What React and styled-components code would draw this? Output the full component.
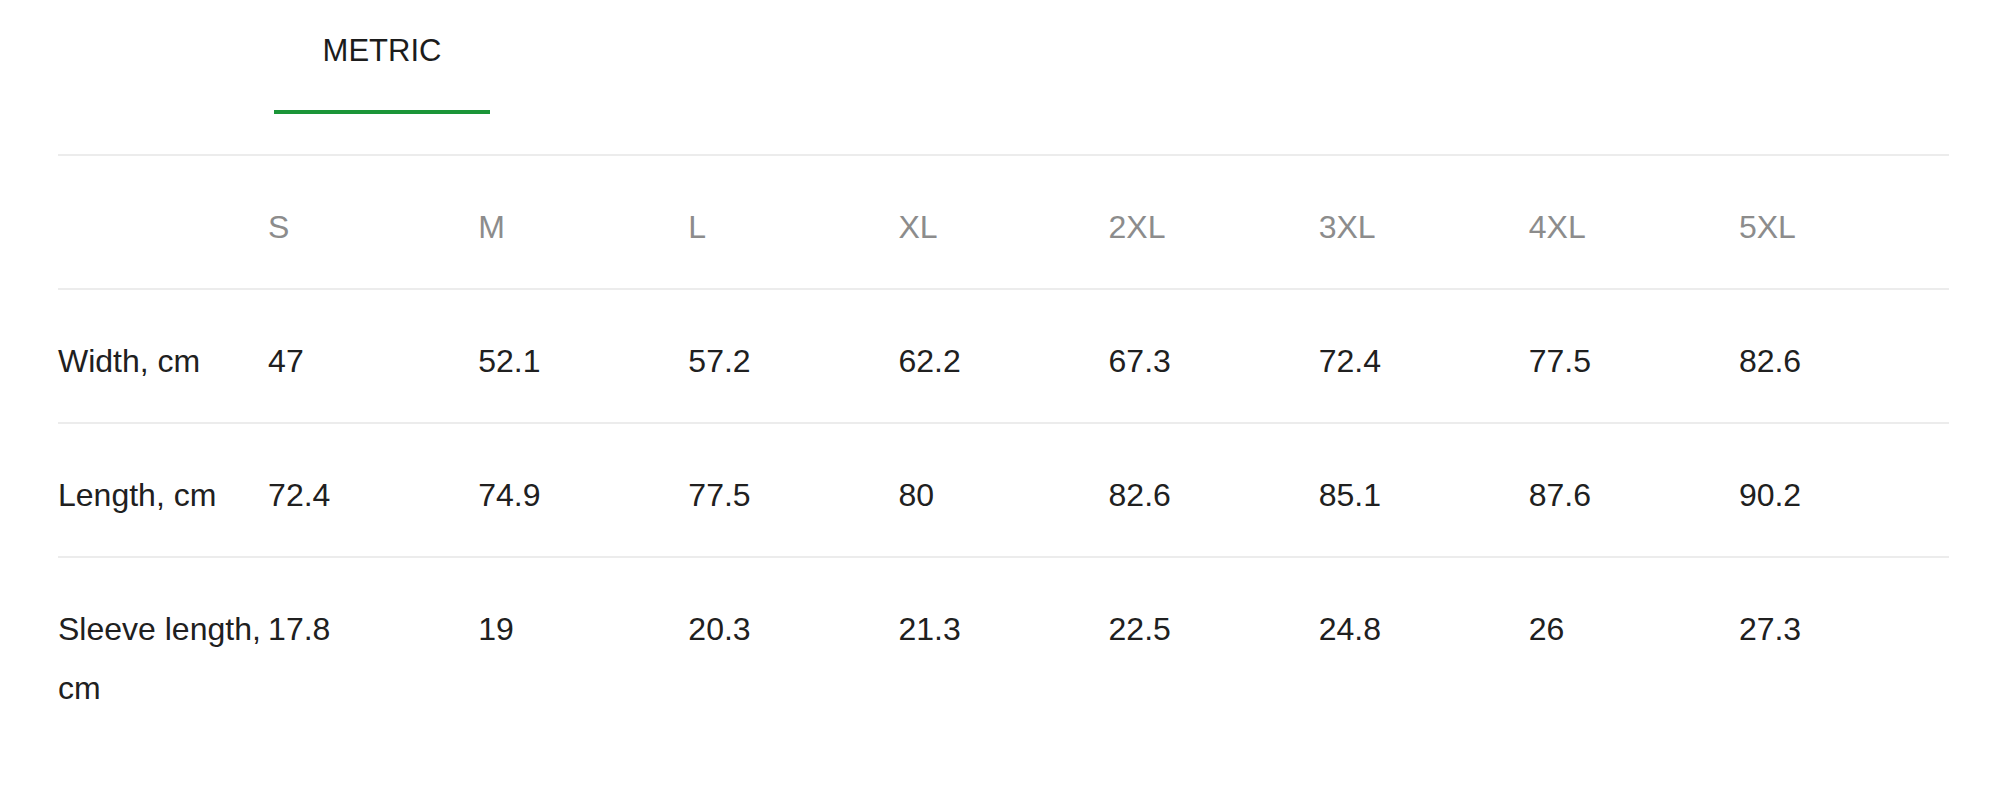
import styled, { createGlobalStyle } from "styled-components";

const GlobalStyle = createGlobalStyle`
  body {
    margin: 0;
    background: #ffffff;
    font-family: "Liberation Sans", Arial, sans-serif;
  }
`;

const sizes = ["S", "M", "L", "XL", "2XL", "3XL", "4XL", "5XL"];

const rows = [
  { label: "Width, cm", values: ["47", "52.1", "57.2", "62.2", "67.3", "72.4", "77.5", "82.6"] },
  { label: "Length, cm", values: ["72.4", "74.9", "77.5", "80", "82.6", "85.1", "87.6", "90.2"] },
  { label: "Sleeve length, cm", values: ["17.8", "19", "20.3", "21.3", "22.5", "24.8", "26", "27.3"] },
];

export const Page = styled.div`
  padding: 0 51px 0 58px;
`;

export const TabBar = styled.div`
  display: flex;
  padding-left: 216px;
  margin-bottom: 40px;
`;

export const Tab = styled.div`
  width: 216px;
  box-sizing: border-box;
  padding: 33px 0 42px;
  text-align: center;
  font-size: 31px;
  line-height: 35px;
  color: #1c1c1c;
  border-bottom: 4px solid ${(props) => (props.active ? "#1b9538" : "transparent")};
`;

export const Table = styled.table`
  width: 100%;
  table-layout: fixed;
  border-collapse: separate;
  border-spacing: 0;
`;

export const HeadCell = styled.th`
  text-align: left;
  vertical-align: top;
  font-weight: 400;
  font-size: 32px;
  line-height: 59px;
  color: #8c8c8c;
  padding: 42px 0 31px;
  border-top: 2px solid #ececec;
`;

export const Cell = styled.td`
  text-align: left;
  vertical-align: top;
  font-size: 32px;
  line-height: 59px;
  color: #202020;
  padding: 42px 0 31px;
  border-top: 2px solid #ececec;
`;

const App = () => {
  return (
    <Page>
      <GlobalStyle />
      <TabBar>
        <Tab active>METRIC</Tab>
      </TabBar>
      <Table>
        <thead>
          <tr>
            <HeadCell />
            {sizes.map((s) => (
              <HeadCell key={s}>{s}</HeadCell>
            ))}
          </tr>
        </thead>
        <tbody>
          {rows.map((row) => (
            <tr key={row.label}>
              <Cell>{row.label}</Cell>
              {row.values.map((v, i) => (
                <Cell key={i}>{v}</Cell>
              ))}
            </tr>
          ))}
        </tbody>
      </Table>
    </Page>
  );
};

export default App;
